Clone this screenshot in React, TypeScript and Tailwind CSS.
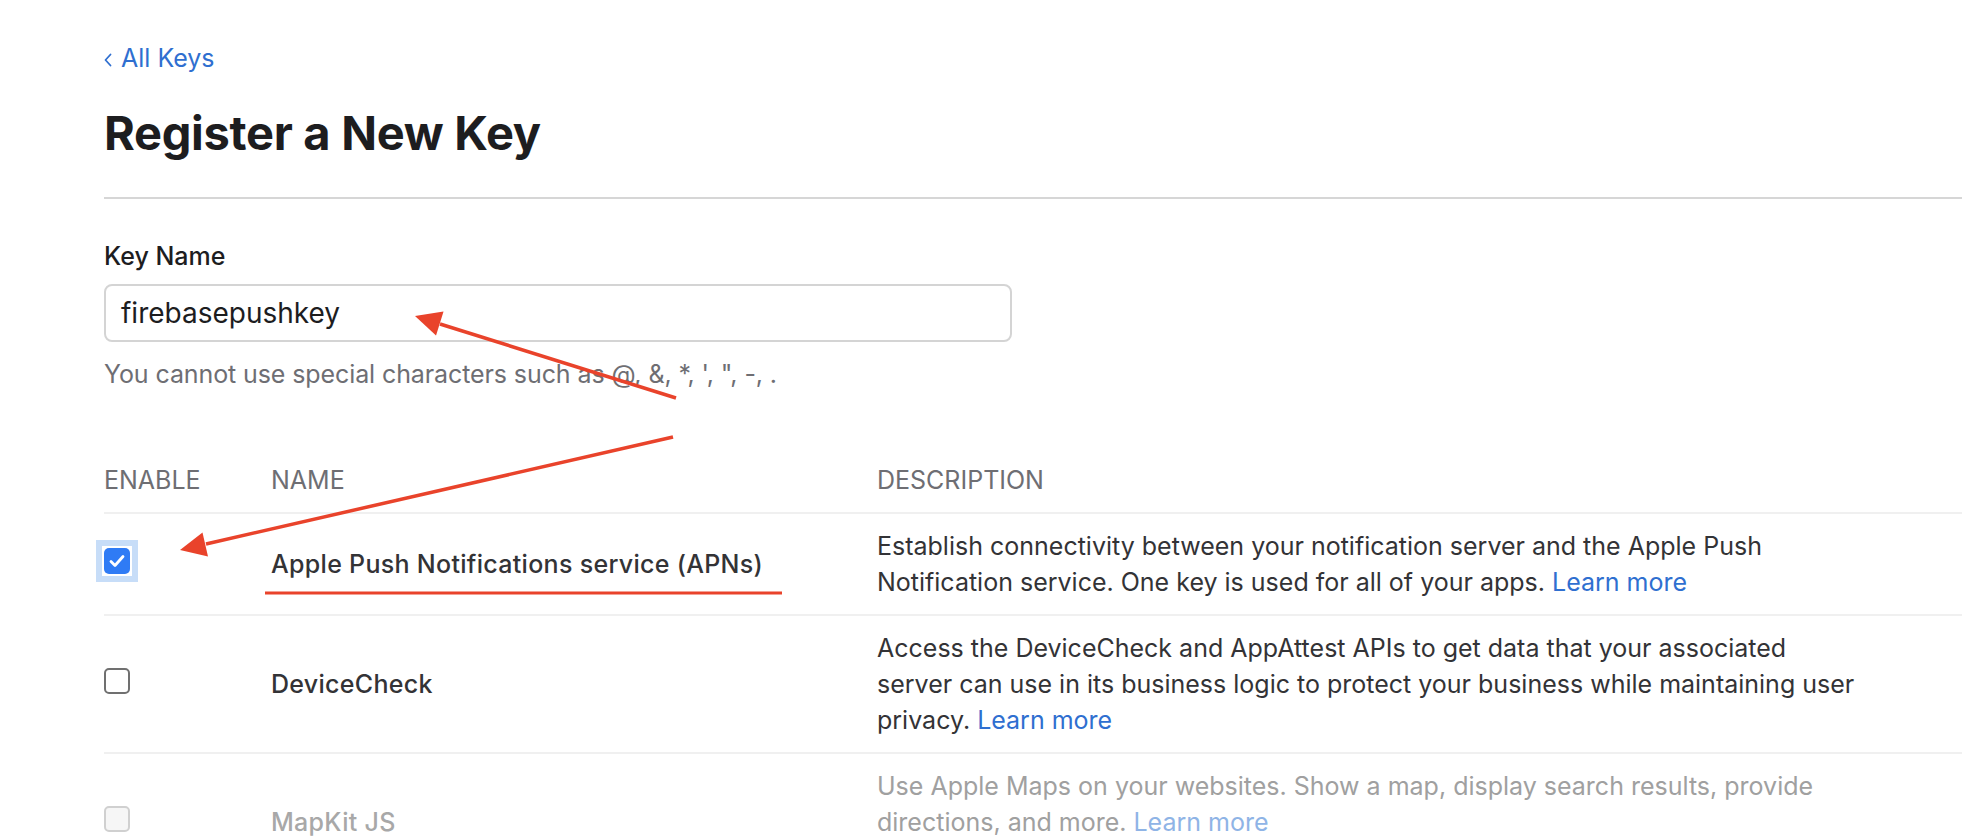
import React from "react";

type Service = {
  name: string;
  lines: string[];
  checked?: boolean;
  disabled?: boolean;
  tall?: boolean;
};

const services: Service[] = [
  {
    name: "Apple Push Notifications service (APNs)",
    lines: [
      "Establish connectivity between your notification server and the Apple Push",
      "Notification service. One key is used for all of your apps.",
    ],
    checked: true,
  },
  {
    name: "DeviceCheck",
    lines: [
      "Access the DeviceCheck and AppAttest APIs to get data that your associated",
      "server can use in its business logic to protect your business while maintaining user",
      "privacy.",
    ],
  },
  {
    name: "MapKit JS",
    lines: [
      "Use Apple Maps on your websites. Show a map, display search results, provide",
      "directions, and more.",
    ],
    disabled: true,
    tall: true,
  },
];

const Checkbox = ({ checked, disabled }: { checked?: boolean; disabled?: boolean }) => {
  if (checked) {
    return (
      <span className="-m-[8px] bg-[#c7ddf8] p-[6px] inline-flex">
        <span className="bg-white p-[2px] inline-flex">
          <span className="w-[26px] h-[26px] rounded-[5px] bg-[#2f7bf5] flex items-center justify-center">
            <svg width="16" height="14" viewBox="0 0 16 14" fill="none">
              <path d="M2 7.5 L6 11.5 L14 2.5" stroke="#fff" strokeWidth="2.8" strokeLinecap="round" strokeLinejoin="round" />
            </svg>
          </span>
        </span>
      </span>
    );
  }
  return (
    <span
      className={
        disabled
          ? "w-[26px] h-[26px] rounded-[5px] border-2 border-[#d0d0d0] bg-[#f6f6f6] inline-block"
          : "w-[26px] h-[26px] rounded-[5px] border-2 border-[#707070] bg-white inline-block"
      }
    />
  );
};

export default function App() {
  return (
    <div className="relative h-screen bg-white overflow-hidden font-['Inter','Liberation_Sans',sans-serif] text-[25px] leading-[36px] text-[#333336]">
      <div className="pl-[104px] pt-[40px]">
        <a className="flex items-center gap-[9px] text-[#2f6fd0]">
          <svg width="8" height="14" viewBox="0 0 8 14" fill="none" className="mt-[3px]">
            <path d="M6.5 1.5 L1.5 7 L6.5 12.5" stroke="#2f6fd0" strokeWidth="1.8" strokeLinecap="round" strokeLinejoin="round" />
          </svg>
          All Keys
        </a>
        <h1 className="mt-[29px] text-[47px] leading-[56px] font-bold text-[#1d1d1f] tracking-[-0.3px]">
          Register a New Key
        </h1>
        <div className="mt-[36px] h-[2px] bg-[#d6d6d6]" />

        <div className="mt-[39px] font-medium text-[#1d1d1f]">Key Name</div>
        <div className="mt-[10px] w-[908px] h-[58px] rounded-[8px] border-2 border-[#d4d4d4] flex items-center pl-[15px] text-[28px] text-[#1d1d1f]">
          firebasepushkey
        </div>
        <div className="mt-[14px] text-[#6e6e73] tracking-[-0.1px]">
          You cannot use special characters such as @, &amp;, *, ', ", -, .
        </div>

        <div className="mt-[56px] grid grid-cols-[167px_606px_1fr] py-[14px] text-[#6e6e73]">
          <div>ENABLE</div>
          <div>NAME</div>
          <div>DESCRIPTION</div>
        </div>

        {services.map((s) => (
          <div
            key={s.name}
            className={
              s.tall
                ? "grid grid-cols-[167px_606px_1fr] border-t-2 border-[#f0f0f0] py-[14px] min-h-[138px]"
                : "grid grid-cols-[167px_606px_1fr] border-t-2 border-[#f0f0f0] py-[14px]"
            }
          >
            <div className="flex items-center">
              <span className="mb-[6px] inline-flex">
                <Checkbox checked={s.checked} disabled={s.disabled} />
              </span>
            </div>
            <div
              className={
                s.disabled
                  ? "flex items-center font-medium tracking-[0.3px] text-[#a8a8a8]"
                  : "flex items-center font-medium tracking-[0.3px] text-[#333336]"
              }
            >
              {s.name}
            </div>
            <div className={s.disabled ? "text-[#a0a0a0] whitespace-nowrap" : "text-[#333336] whitespace-nowrap"}>
              {s.lines.map((line, i) => (
                <div key={i}>
                  {line}
                  {i === s.lines.length - 1 && (
                    <>
                      {" "}
                      <a className={s.disabled ? "text-[#8fb4e6]" : "text-[#2f6fd0]"}>Learn more</a>
                    </>
                  )}
                </div>
              ))}
            </div>
          </div>
        ))}
      </div>

      <svg className="absolute inset-0 pointer-events-none" width="1962" height="836" viewBox="0 0 1962 836">
        <g fill="#e9432b" stroke="#e9432b">
          <line x1="676" y1="398" x2="440" y2="324" strokeWidth="3.5" />
          <polygon points="415,316 443.5,311.5 436,335.5" stroke="none" />
          <line x1="673" y1="437" x2="206" y2="544" strokeWidth="3.5" />
          <polygon points="180,550 208,556.5 202.5,532.5" stroke="none" />
          <line x1="265" y1="593" x2="782" y2="593" strokeWidth="3" />
        </g>
      </svg>
    </div>
  );
}
